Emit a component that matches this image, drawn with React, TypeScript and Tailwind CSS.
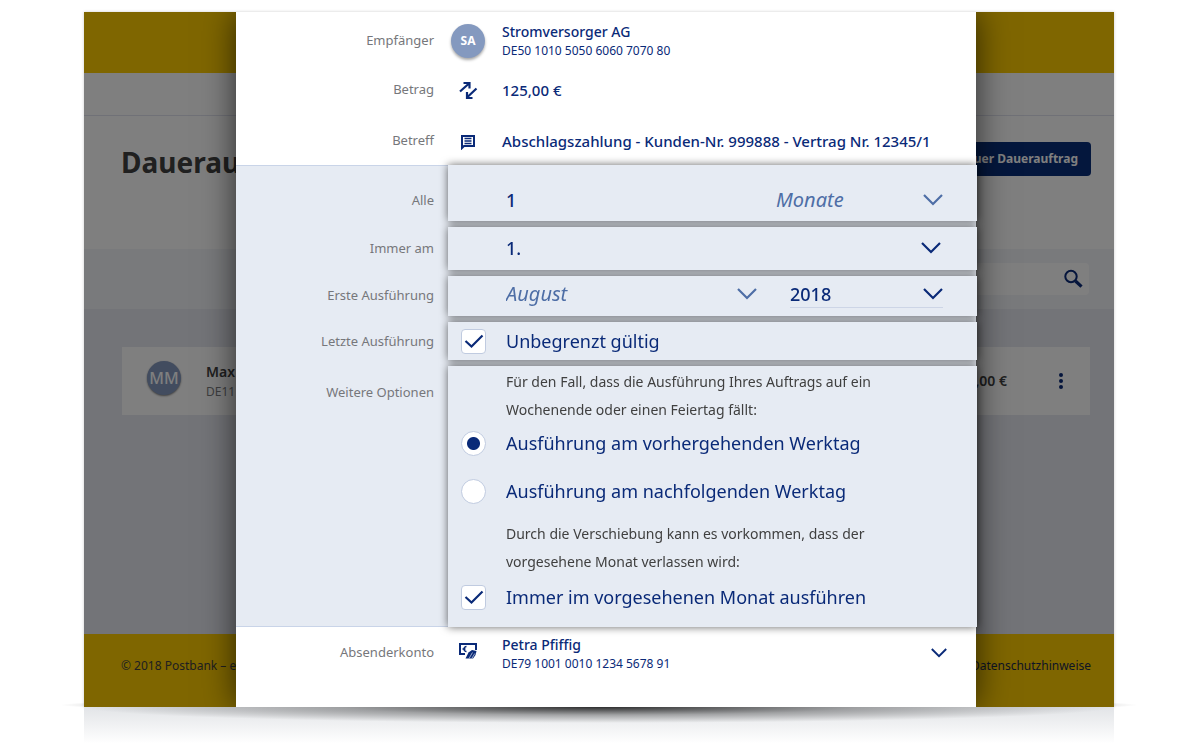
import { useState, type ReactNode } from 'react'
import clsx from 'clsx'

const months = [ 'Januar', 'Februar', 'März', 'April', 'Mai', 'Juni', 'Juli', 'August', 'September', 'Oktober', 'November', 'Dezember' ]

function Chevron({ small, className }: { small?: boolean, className?: string }) {
	return (
		<svg
			viewBox="0 0 20 12"
			fill="none"
			stroke="currentColor"
			strokeWidth={small ? 2.4 : 2.2}
			className={clsx(small ? 'w-4 h-2.5' : 'w-5 h-3', className)}
			aria-hidden="true"
		>
			<path d="M1 1l9 9 9-9" />
		</svg>
	)
}

function TransferIcon() {
	return (
		<svg viewBox="0 0 20 20" className="w-5 h-5" fill="none" stroke="currentColor" strokeWidth="2.2" aria-hidden="true">
			<path d="M2 11.500L11 3.500M5.500 3h6v5.500M18.500 8.500l-9 8.500M9 12v6h5.500" />
		</svg>
	)
}

function MessageIcon() {
	return (
		<svg viewBox="0 0 16 16" className="w-4 h-4 mt-0.5" fill="none" stroke="currentColor" aria-hidden="true">
			<path d="M2 14V2h12v10H4z" strokeWidth="2" />
			<path d="M4.500 4.500h7M4.500 7h7M4.500 9.500h7" strokeWidth="1.300" />
		</svg>
	)
}

function CashIcon() {
	return (
		<svg viewBox="0 0 20 17" className="w-5 h-[17px] -mt-1" aria-hidden="true">
			<path d="M7 12H2V2h16v6" fill="none" stroke="currentColor" strokeWidth="2" />
			<path d="M8.500 4.500a2.300 2.300 0 1 0 0 5M4.500 7h3" fill="none" stroke="currentColor" strokeWidth="1.500" />
			<path d="M7.500 16.500l3-6 3.500-2.500 4.500 1-1 4-2.500 3.500z" fill="currentColor" />
			<path d="M11 16.500l3.500-6M13.800 16.500l3-5" stroke="white" strokeWidth=".6" />
		</svg>
	)
}

function SearchIcon() {
	return (
		<svg viewBox="0 0 20 20" className="w-5 h-5" fill="none" stroke="currentColor" aria-hidden="true">
			<circle cx="8" cy="7.500" r="5.700" strokeWidth="2" />
			<path d="M12.500 12l6 5.700" strokeWidth="3.200" />
		</svg>
	)
}

type SelectFieldProps = {
	id?: string
	label?: string
	value: string
	options: string[]
	onChange: (value: string) => void
	muted?: boolean
	underline?: boolean
	className?: string
}

function SelectField({ id, label, value, options, onChange, muted, underline, className }: SelectFieldProps) {
	return (
		<div className={clsx(
			'grid items-center border-b',
			underline ? 'border-[#cdd5e6]' : 'border-transparent',
			muted ? 'text-[#4e6ea6]' : 'text-[#0a2a78]',
			className,
		)}>
			<select
				id={id}
				aria-label={label}
				value={value}
				onChange={(e) => onChange(e.target.value)}
				className={clsx(
					'col-start-1 row-start-1 w-full appearance-none bg-transparent leading-6 outline-none',
					muted ? 'text-xl leading-6 italic' : 'text-lg leading-6 font-medium',
				)}
			>
				{options.map((o) => <option key={o}>{o}</option>)}
			</select>
			<Chevron className="col-start-1 row-start-1 justify-self-end pointer-events-none" />
		</div>
	)
}

function CheckField({ id, label, checked, onChange }: { id: string, label: string, checked: boolean, onChange: (v: boolean) => void }) {
	return (
		<div className="flex items-center gap-5 pl-[13px]">
			<span className="grid place-items-center">
				<input
					id={id}
					type="checkbox"
					checked={checked}
					onChange={(e) => onChange(e.target.checked)}
					className="col-start-1 row-start-1 w-[25px] h-[25px] appearance-none bg-white border border-[#c0cbe0] rounded"
				/>
				{checked && (
					<svg viewBox="0 0 20 16" className="col-start-1 row-start-1 w-5 h-4 pointer-events-none" fill="none" stroke="#0a2a78" strokeWidth="2.2" aria-hidden="true">
						<path d="M1.500 8l6 5.500L18.500 2.500" />
					</svg>
				)}
			</span>
			<label htmlFor={id} className="text-lg leading-6">{label}</label>
		</div>
	)
}

function RadioField({ id, label, checked, onChange }: { id: string, label: string, checked: boolean, onChange: () => void }) {
	return (
		<div className="h-[38px] flex items-center gap-5 pl-[13px]">
			<input
				id={id}
				type="radio"
				name="werktag"
				checked={checked}
				onChange={onChange}
				className="w-[25px] h-[25px] appearance-none rounded-full bg-white border border-[#c0cbe0] checked:bg-[radial-gradient(circle,#0a2a78_6px,white_7px)]"
			/>
			<label htmlFor={id} className="text-lg leading-6">{label}</label>
		</div>
	)
}

function InfoRow({ label, icon, children, className }: { label: string, icon: ReactNode, children: ReactNode, className?: string }) {
	return (
		<div className={clsx('flex items-center', className)}>
			<span className="w-[198px] text-right text-[13px] text-[#76777b]">{label}</span>
			<span className="w-[34px] mx-[17px] flex justify-center">{icon}</span>
			<div className="flex-1 text-[15px] leading-5 font-medium">{children}</div>
		</div>
	)
}

// Overview page that lies dimmed behind the dialog
function OverviewPage() {
	return (
		<div className="col-start-1 row-start-1 flex flex-col bg-white text-[#404040]">
			<header className="h-[61px] bg-[#ffcc00]" />
			<nav className="h-[43px] border-b border-[#e0e3ee]" />
			<div className="h-[133px] pl-[37px] pr-[23px] pt-[26px] flex items-start justify-between">
				<h1 className="text-[28px] leading-10 font-bold">Daueraufträge</h1>
				<button className="h-[34px] px-[13px] rounded bg-[#082e7a] text-white text-xs font-bold">Neuer Dauerauftrag</button>
			</div>
			<div className="h-[60px] pr-[25px] flex items-center justify-end bg-[#f2f4f8]">
				<div className="w-[320px] h-8 pr-1.5 flex items-center bg-white rounded-sm text-[#0a2a78]">
					<input aria-label="Suche" className="flex-1 min-w-0 px-3 bg-transparent outline-none" />
					<button aria-label="Suchen"><SearchIcon /></button>
				</div>
			</div>
			<main className="flex-1 pt-[38px] pl-[38px] pr-6 bg-[#e6e9f1]">
				<div className="h-[68px] pl-[25px] pr-[23px] flex items-center bg-white">
					<span className="w-[34px] h-[34px] -mt-1.5 rounded-full bg-[#8499bf] flex items-center justify-center text-white text-base font-medium shadow-[0_1px_2px_rgba(0,0,0,0.5)]">MM</span>
					<div className="ml-[25px] pt-0.5">
						<p className="text-sm leading-5 font-semibold">Max M.</p>
						<p className="text-xs leading-5 text-[#7b7c80]">DE11 1001</p>
					</div>
					<span className="ml-auto text-sm font-semibold">125,00 €</span>
					<button aria-label="Mehr" className="ml-[48px] w-3 flex flex-col items-center gap-0.5">
						<span className="w-1 h-1 rounded-full bg-[#0a2a78]" />
						<span className="w-1 h-1 rounded-full bg-[#0a2a78]" />
						<span className="w-1 h-1 rounded-full bg-[#0a2a78]" />
					</button>
				</div>
			</main>
			<footer className="h-[73px] pl-[37px] pr-[23px] pb-2.5 flex items-center justify-between bg-[#ffcc00] text-xs">
				<span>© 2018 Postbank – ein Institut</span>
				<a href="#datenschutz" className="text-[#1c2b4a]">Datenschutzhinweise</a>
			</footer>
		</div>
	)
}

function OrderDialog() {
	const [ interval, setInterval ] = useState('1')
	const [ unit, setUnit ] = useState('Monate')
	const [ day, setDay ] = useState('1.')
	const [ month, setMonth ] = useState('August')
	const [ year, setYear ] = useState('2018')
	const [ unlimited, setUnlimited ] = useState(true)
	const [ shift, setShift ] = useState('vorher')
	const [ keepMonth, setKeepMonth ] = useState(true)

	return (
		<form className="col-start-1 row-start-1 relative ml-[152px] mr-[138px] flex flex-col bg-white text-[#0a2a78] shadow-[0_0_32px_rgba(0,0,0,0.65)]">
			<InfoRow
				label="Empfänger"
				className="h-[57px]"
				icon={<span className="w-[34px] h-[34px] rounded-full bg-[#8499bf] flex items-center justify-center text-white text-xs font-bold shadow-[0_2px_3px_rgba(0,0,0,0.35)]">SA</span>}
			>
				<p className="text-sm leading-5">Stromversorger AG</p>
				<p className="text-xs leading-[18px] font-normal">DE50 1010 5050 6060 7070 80</p>
			</InfoRow>
			<InfoRow label="Betrag" className="h-[42px]" icon={<TransferIcon />}>125,00 €</InfoRow>
			<InfoRow label="Betreff" className="h-[54px] pt-1.5" icon={<MessageIcon />}>
				Abschlagszahlung - Kunden-Nr. 999888 - Vertrag Nr. 12345/1
			</InfoRow>

			<section className="flex bg-[#e6ebf3] shadow-[inset_0_1px_0_#c9d4e8,inset_0_-1px_0_#c9d4e8]">
				<div className="w-[198px] mr-[14px] flex flex-col gap-1.5 text-right text-[13px] text-[#76777b]">
					<label htmlFor="interval" className="h-14 pt-4 flex items-center justify-end">Alle</label>
					<label htmlFor="day" className="h-[43px] flex items-center justify-end">Immer am</label>
					<label htmlFor="month" className="h-10 flex items-center justify-end">Erste Ausführung</label>
					<span className="h-[38px] pt-0.5 flex items-center justify-end">Letzte Ausführung</span>
					<span className="pt-4 leading-5">Weitere Optionen</span>
				</div>

				{/* One drop shadow for the whole stack, so the cards do not darken each other */}
				<div className="flex-1 -mr-px flex flex-col gap-1.5 *:bg-[#e6ebf3] drop-shadow-[0_0_4px_rgba(0,0,0,0.6)]">
					<div className="h-14 pt-3.5 pl-[58px] pr-[34px] flex items-center">
						<input
							id="interval"
							type="text"
							value={interval}
							onChange={(e) => setInterval(e.target.value)}
							className="flex-1 min-w-0 bg-transparent text-lg leading-6 font-medium outline-none"
						/>
						<SelectField label="Einheit" value={unit} options={[ 'Wochen', 'Monate', 'Jahre' ]} onChange={setUnit} muted className="w-[167px]" />
					</div>
					<div className="h-[43px] pl-[58px] pr-9 flex items-center">
						<SelectField id="day" value={day} options={[ '1.', '15.', '30.' ]} onChange={setDay} className="flex-1" />
					</div>
					<div className="h-10 pt-[5px] pl-[58px] pr-[34px] flex items-start gap-[33px]">
						<SelectField id="month" value={month} options={months} onChange={setMonth} muted className="flex-1 h-[27px]" />
						<SelectField label="Jahr" value={year} options={[ '2018', '2019', '2020' ]} onChange={setYear} underline className="w-[153px] h-[27px]" />
					</div>
					<div className="h-[38px] flex items-center">
						<CheckField id="unlimited" label="Unbegrenzt gültig" checked={unlimited} onChange={setUnlimited} />
					</div>
					<div className="pt-0.5 pb-[9px]">
						<p className="pl-[58px] text-sm leading-7 text-[#404040]">
							Für den Fall, dass die Ausführung Ihres Auftrags auf ein<br />
							Wochenende oder einen Feiertag fällt:
						</p>
						<div className="flex flex-col gap-2.5">
							<RadioField id="before" label="Ausführung am vorhergehenden Werktag" checked={shift === 'vorher'} onChange={() => setShift('vorher')} />
							<RadioField id="after" label="Ausführung am nachfolgenden Werktag" checked={shift === 'nachher'} onChange={() => setShift('nachher')} />
						</div>
						<p className="mt-2.5 pl-[58px] text-sm leading-7 text-[#404040]">
							Durch die Verschiebung kann es vorkommen, dass der<br />
							vorgesehene Monat verlassen wird:
						</p>
						<div className="h-[42px] flex items-center">
							<CheckField id="keep-month" label="Immer im vorgesehenen Monat ausführen" checked={keepMonth} onChange={setKeepMonth} />
						</div>
					</div>
				</div>
			</section>

			<div className="h-20 pr-[29px] flex items-start">
				<InfoRow label="Absenderkonto" className="flex-1 h-[51px]" icon={<CashIcon />}>
					<p className="pt-0.5 text-sm leading-5">Petra Pfiffig</p>
					<p className="text-xs leading-[18px] font-normal">DE79 1001 0010 1234 5678 91</p>
				</InfoRow>
				<button type="button" aria-label="Absenderkonto wählen" className="h-[51px] flex items-center"><Chevron small /></button>
			</div>
		</form>
	)
}

export default function App() {
	return (
		<div className="pt-3 pl-[84px] pr-[86px] bg-white overflow-hidden font-['Noto_Sans',sans-serif]">
			<div className="relative z-0">
				<div className="absolute -z-10 -inset-x-6 -bottom-1.5 h-4 bg-[radial-gradient(ellipse_50%_50%_at_50%_50%,rgba(0,0,0,0.3)_80%,transparent)]" />
				<div className="grid overflow-hidden shadow-[0_0_3px_rgba(0,0,0,0.2)]">
					<OverviewPage />
					<div className="col-start-1 row-start-1 relative bg-black/50 pointer-events-none" />
					<OrderDialog />
				</div>
			</div>
			<div className="relative h-[43px] bg-[radial-gradient(ellipse_50%_16px_at_50%_0,rgba(0,0,0,0.8),rgba(0,0,0,0.3)_50%,transparent),linear-gradient(#e2e4e7,#ffffff_85%)]" />
		</div>
	)
}
